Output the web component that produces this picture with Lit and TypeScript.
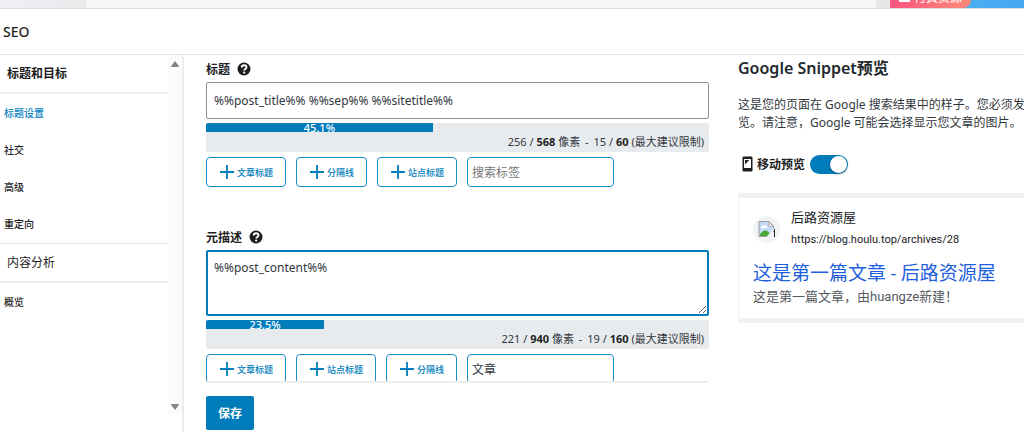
import { LitElement, html, css, svg } from "lit";
import { customElement, property } from "lit/decorators.js";

const FONT = css`"Noto Sans", "Noto Sans CJK SC", sans-serif`;

const plus = html`<svg class="plus" viewBox="0 0 14 14" width="14" height="14" aria-hidden="true">
  ${svg`<path d="M7 .5v13M.5 7h13" stroke="currentColor" stroke-width="1.8" fill="none" stroke-linecap="round"/>`}
</svg>`;

const help = html`<svg viewBox="0 0 14 14" width="14" height="14" aria-hidden="true">
  <circle cx="7" cy="7" r="6.5" fill="#1e1e1e"></circle>
  <path d="M4.700 5.500C4.800 4 5.800 3.300 7.100 3.300c1.400 0 2.400 .8 2.400 2 0 1.700-2.200 1.600-2.200 3.100" fill="none" stroke="#fff" stroke-width="1.900"></path>
  <circle cx="7.2" cy="10.6" r="1.1" fill="#fff"></circle>
</svg>`;

@customElement("seo-meter")
export class SeoMeter extends LitElement {
  @property({ type: Number }) percent = 0;
  @property() pixels = "";
  @property() maxPixels = "";
  @property() chars = "";
  @property() maxChars = "";

  static styles = css`
    :host { display: block; }
    .track { background: #e8ebee; border-radius: 2px; height: 29px; font-family: ${FONT}; }
    .bar { background: #007cba; height: 9px; line-height: 10px; font-size: 11px; font-weight: 500; color: #fff; text-align: center; border-top-left-radius: 2px; }
    .counts { padding-right: 5px; text-align: right; font-size: 11px; line-height: 20px; color: #32373c; }
    .dash { margin: 0 2px; }
    b { color: #1e1e1e; }
  `;

  render() {
    return html`<div class="track">
      <div class="bar" style="width:${this.percent}%">${this.percent}%</div>
      <div class="counts">${this.pixels} / <b>${this.maxPixels}</b> 像素 <span class="dash">-</span> ${this.chars} / <b>${this.maxChars}</b> (最大建议限制)</div>
    </div>`;
  }
}

@customElement("tag-row")
export class TagRow extends LitElement {
  @property({ attribute: false }) tags: string[] = [];
  @property() value = "";

  static styles = css`
    :host { display: block; }
    .row { display: flex; gap: 10px; font-family: ${FONT}; }
    button { display: flex; align-items: center; gap: 3px; height: 30px; padding: 0 12px 0 13px; border: 1px solid #1c8ec7; border-radius: 4px; background: #fff; color: #007cba; font: 500 9px ${FONT}; white-space: nowrap; }
    .plus { flex: none; }
    input { box-sizing: border-box; width: 147px; height: 30px; padding: 0 4px; border: 1px solid #1c8ec7; border-radius: 4px; background: #fff; color: #32373c; font: 12px ${FONT}; }
    input::placeholder { color: #757575; opacity: 1; }
  `;

  render() {
    return html`<div class="row">
      ${this.tags.map((t) => html`<button type="button">${plus}<span>${t}</span></button>`)}
      <input type="text" aria-label="搜索标签" placeholder="搜索标签" .value=${this.value} />
    </div>`;
  }
}

@customElement("app-root")
export class AppRoot extends LitElement {
  static styles = css`
    :host { display: block; font-family: ${FONT}; color: #1e1e1e; }
    * { box-sizing: border-box; }
    .page { height: 100vh; display: flex; flex-direction: column; overflow: hidden; background: #fff; }
    .behind { flex: none; height: 9px; display: flex; background: #e6e7e9; overflow: hidden; border-bottom: 1px solid #dcdcdd; }
    .behind-side { width: 86px; background: linear-gradient(90deg, #eef0f3, #e8eaec); }
    .behind-main { flex: 1; background: #f6f6f6; margin-right: 14px; }
    .behind-blue { width: 134px; background: linear-gradient(90deg, #4fb5ee, #45a9f2); }
    .behind-pink { display: flex; align-items: flex-end; gap: 4px; width: 81px; height: 8px; padding: 0 0 3px 9px; border-bottom-right-radius: 8px; background: linear-gradient(90deg, #fb5580, #fb8a78); color: #fff; font-size: 12px; line-height: 14px; white-space: nowrap; overflow: hidden; }
    .behind-pink i { width: 11px; height: 2px; margin-bottom: 3px; background: #fff; }
    .head { flex: none; height: 46px; padding: 0 3px; border-bottom: 1px solid #e2e4e7; }
    .head h1 { margin: 0; font-size: 14px; font-weight: 500; line-height: 46px; }
    .body { flex: 1; min-height: 0; display: flex; }

    .side { flex: none; width: 184px; display: flex; border-right: 2px solid #eceded; }
    .nav { flex: 1; min-width: 0; }
    .nav h2 { margin: 0; padding: 0 7px; font-size: 12px; font-weight: 400; line-height: 37px; border-bottom: 2px solid #ededee; }
    .nav h2.current { font-weight: 600; }
    .nav ul { margin: 0; padding: 1px 0 0; list-style: none; }
    .nav ul + h2 { border-top: 1px solid #dfe0e2; }
    .nav a { display: block; padding: 0 4px; height: 37px; line-height: 37px; font-size: 10px; font-weight: 500; color: #1e1e1e; text-decoration: none; }
    .nav a.active { color: #0a84c1; }
    .rail { width: 14px; margin-bottom: 17px; padding: 6px 0 5px; display: flex; flex-direction: column; align-items: center; justify-content: space-between; background: #fbfbfb; }

    .main { flex: 1; min-width: 0; padding-left: 22px; display: grid; grid-template-columns: minmax(0, 503fr) minmax(0, 286fr); column-gap: 29px; }
    .form { min-height: 0; display: flex; flex-direction: column; }
    .scroll { flex: 1; min-height: 0; overflow: hidden; border-bottom: 2px solid #eeeeef; }
    .label { display: flex; align-items: center; gap: 7px; height: 27px; font-size: 12px; font-weight: 600; }
    .title-input, .desc { display: block; width: 100%; border: 1px solid #8c8f94; border-radius: 2px; padding: 0 7px; background: #fff; color: #32373c; font: 12px/18px ${FONT}; }
    .title-input { height: 37px; }
    .desc { height: 66px; padding: 7px 6px; border: 2px solid #007cba; resize: vertical; outline: none; }
    seo-meter { margin: 4px 0 5px; }
    .field + .field { margin-top: 36px; }
    .foot { flex: none; height: 49px; padding-top: 13px; }
    .save { height: 34px; padding: 0 12px; border: 0; border-radius: 2px; background: #007cba; color: #fff; font: 600 12px ${FONT}; }

    .preview { overflow: hidden; white-space: nowrap; }
    .preview h2 { margin: 0; font-size: 16px; font-weight: 600; line-height: 26px; color: #23282d; }
    .preview p { margin: 15px 0 0; font-size: 12px; line-height: 18px; color: #32373c; }
    .switch { display: flex; align-items: center; gap: 4px; height: 20px; margin-top: 22px; padding-left: 4px; font-size: 12px; font-weight: 600; }
    .switch input { appearance: none; width: 38px; height: 19px; margin: 0 0 0 1px; padding: 1px; border-radius: 10px; background: #007cba; display: flex; justify-content: flex-end; }
    .switch input::before { content: ""; width: 17px; height: 17px; border-radius: 50%; background: #fff; box-shadow: 0 1px 3px rgba(0, 0, 0, 0.3); }
    .card { margin-top: 19px; padding: 10px 14px 11px; border: solid #f0f1f2; border-width: 5px 0 5px 1px; font-family: Roboto, "Noto Sans CJK SC", sans-serif; }
    .site { display: flex; align-items: center; gap: 11px; }
    .icon { flex: none; display: grid; place-items: center; width: 27px; height: 27px; border-radius: 50%; background: #f1f3f4; }
    .name { font-size: 13px; line-height: 20px; color: #202124; }
    .url { font-size: 11px; line-height: 23px; color: #202124; }
    .result { display: block; margin-top: 10px; font-size: 19px; line-height: 26px; color: #1f5fdc; text-decoration: none; }
    .text { font-size: 13px; line-height: 20px; color: #55595e; }
  `;

  private item(text: string, active = false) {
    return html`<li><a href="#" class=${active ? "active" : ""}>${text}</a></li>`;
  }

  render() {
    return html`
      <div class="page">
        <div class="behind">
          <div class="behind-side"></div>
          <div class="behind-main"></div>
          <div class="behind-blue"><div class="behind-pink"><i></i>付费资源</div></div>
        </div>
        <header class="head"><h1>SEO</h1></header>
        <div class="body">
          <aside class="side">
            <nav class="nav">
              <h2 class="current">标题和目标</h2>
              <ul>
                ${this.item("标题设置", true)}${this.item("社交")}${this.item("高级")}${this.item("重定向")}
              </ul>
              <h2>内容分析</h2>
              <ul>${this.item("概览")}</ul>
            </nav>
            <div class="rail">
              <svg width="8" height="6" viewBox="0 0 8 6"><path d="M4 0L8 5.2Q8 6 7 6H1Q0 6 0 5.2Z" fill="#858585"/></svg>
              <svg width="8" height="6" viewBox="0 0 8 6"><path d="M4 6L8 .8Q8 0 7 0H1Q0 0 0 .8Z" fill="#858585"/></svg>
            </div>
          </aside>
          <div class="main">
            <section class="form">
              <div class="scroll">
                <div class="field">
                  <div class="label"><label for="title">标题</label>${help}</div>
                  <input id="title" class="title-input" type="text" .value=${"%%post_title%% %%sep%% %%sitetitle%%"} />
                  <seo-meter .percent=${45.1} pixels="256" .maxPixels=${"568"} chars="15" .maxChars=${"60"}></seo-meter>
                  <tag-row .tags=${["文章标题", "分隔线", "站点标题"]}></tag-row>
                </div>
                <div class="field">
                  <div class="label"><label for="desc">元描述</label>${help}</div>
                  <textarea id="desc" class="desc" .value=${"%%post_content%%"}></textarea>
                  <seo-meter .percent=${23.5} pixels="221" .maxPixels=${"940"} chars="19" .maxChars=${"160"}></seo-meter>
                  <tag-row .tags=${["文章标题", "站点标题", "分隔线"]} .value=${"文章"}></tag-row>
                </div>
              </div>
              <div class="foot"><button class="save" type="button">保存</button></div>
            </section>
            <section class="preview">
              <h2>Google Snippet预览</h2>
              <p>这是您的页面在 Google 搜索结果中的样子。您必须发<br />览。请注意，Google 可能会选择显示您文章的图片。</p>
              <label class="switch">
                <svg width="11" height="16" viewBox="0 0 11 16" aria-hidden="true">
                  <rect x=".5" y=".5" width="10" height="15" rx="1.2" fill="#1e1e1e"/>
                  <rect x="2" y="3" width="7" height="9" fill="#fff"/>
                  <path d="M3 4h4.2L3 8.6Z" fill="#1e1e1e"/>
                </svg>
                <span>移动预览</span>
                <input type="checkbox" role="switch" checked />
              </label>
              <div class="card">
                <div class="site">
                  <span class="icon">
                    <svg width="18" height="17" viewBox="0 0 18 17" aria-hidden="true">
                      <path d="M1 .5h10l4.500 4.500v10.500H1Z" fill="#c5d9f8" stroke="#9a9da1"/>
                      <path d="M3 6.500a2 2 0 0 1 2-2 2.500 2.500 0 0 1 4 1.500v1H3Z" fill="#fff"/>
                      <path d="M1.500 15c1-4 4-5.500 6-5.500S12 12 13 15Z" fill="#4ba832"/>
                      <path d="M16.500 6.500L8 16.500h8.500Z" fill="#f1f3f4"/>
                      <path d="M10.800 .8v4.400h4.400Z" fill="#fff" stroke="#9a9da1" stroke-width=".8"/>
                      <path d="M16.500 8v8M15.500 10.500h1" stroke="#222" fill="none"/>
                    </svg>
                  </span>
                  <div>
                    <div class="name">后路资源屋</div>
                    <div class="url">https://blog.houlu.top/archives/28</div>
                  </div>
                </div>
                <a class="result" href="#">这是第一篇文章 - 后路资源屋</a>
                <div class="text">这是第一篇文章，由huangze新建！</div>
              </div>
            </section>
          </div>
        </div>
      </div>
    `;
  }
}
